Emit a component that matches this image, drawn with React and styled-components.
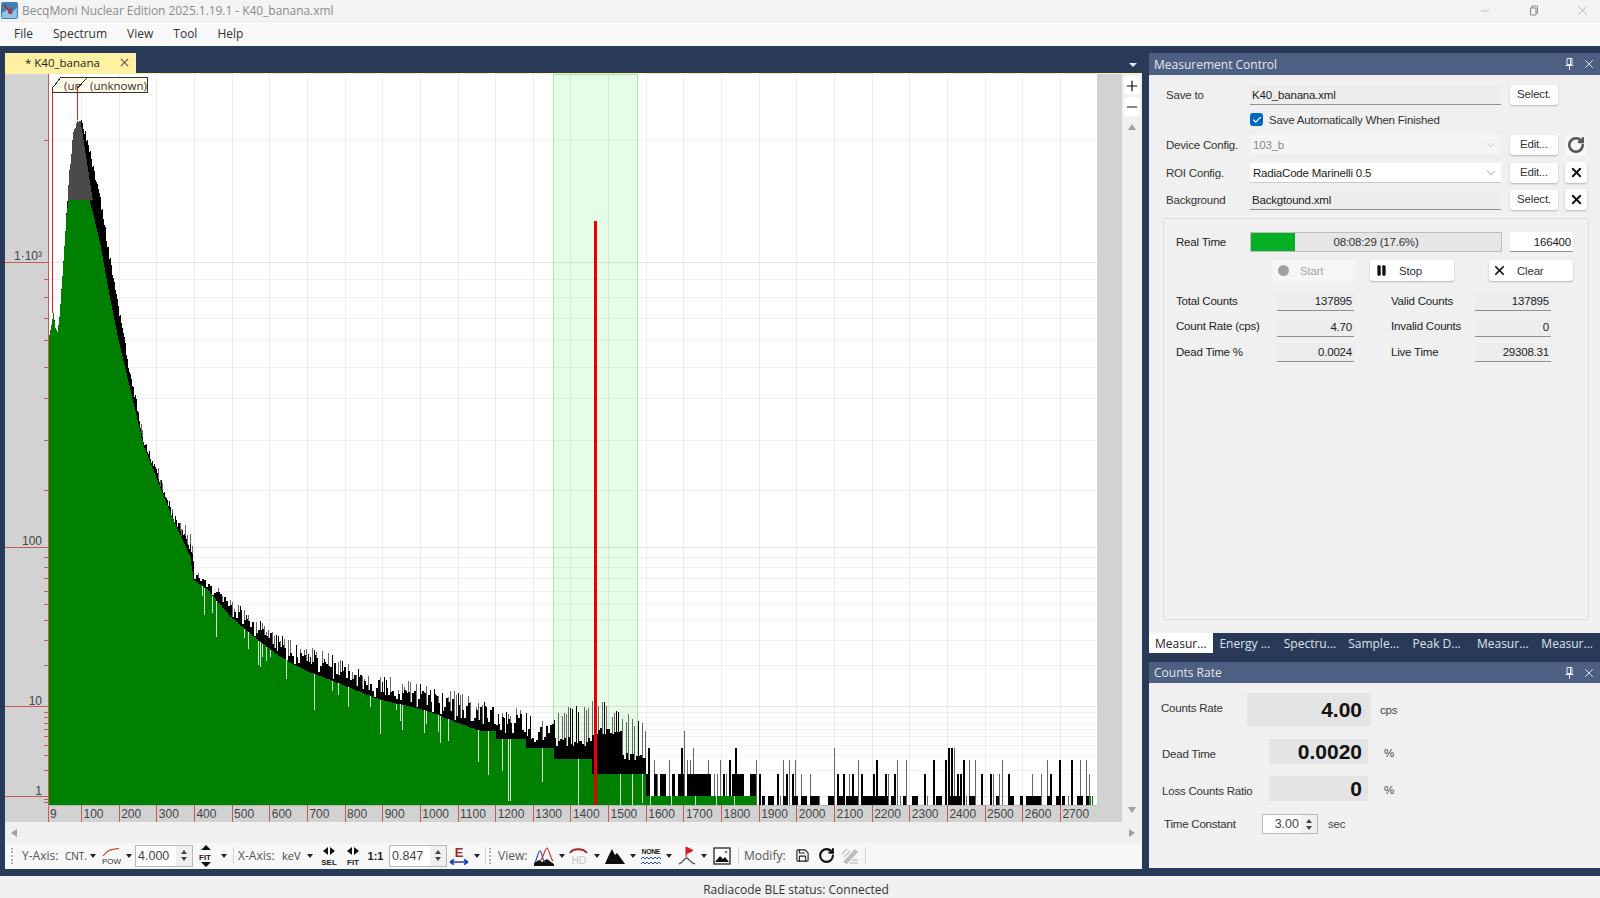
import React from 'react';
import styled, { createGlobalStyle } from 'styled-components';
import { X, RotateCw, Save, ChevronDown, Pause, Plus, Minus, Check } from 'lucide-react';

const GlobalStyle = createGlobalStyle`
  html, body { margin: 0; padding: 0; background: #f0f0f0; }
  body { font-family: "Liberation Sans", Arial, sans-serif; font-size: 11.5px; letter-spacing: -0.2px; color: #222; overflow: hidden; }
`;

const UI_FONT = '"Open Sans", "Liberation Sans", sans-serif';

// ---- spectrum data, seeded so every render looks the same ----
const rand = (() => {
  let a = 20250119;
  return () => {
    a |= 0; a = (a + 0x6d2b79f5) | 0;
    let t = Math.imul(a ^ (a >>> 15), 1 | a);
    t = (t + Math.imul(t ^ (t >>> 7), 61 | t)) ^ t;
    return ((t ^ (t >>> 14)) >>> 0) / 4294967296;
  };
})();

const BOTTOM = 805;
const lerp = (pts, x) => {
  for (let i = 1; i < pts.length; i++) {
    if (x <= pts[i][0]) {
      const [x0, y0] = pts[i - 1];
      const [x1, y1] = pts[i];
      return y0 + ((y1 - y0) * (x - x0)) / (x1 - x0);
    }
  }
  return pts[pts.length - 1][1];
};

const blackEnv = [[49,335],[51,325],[53,313],[55,328],[57,332],[59,318],[61,290],[63,262],[66,215],[69,170],[72,140],[75,125],[78,118],[82,124],[86,138],[90,155],[94,175],[100,200],[108,250],[115,290],[124,340],[128,365],[143,438],[155,470],[173,515],[190,548],[197,572],[230,596],[263,622],[297,642],[330,652],[363,668],[397,678],[430,686],[463,693],[497,705],[553,712],[595,697],[645,722]];
const greenEnv = [[49,335],[51,325],[53,313],[55,328],[57,332],[59,318],[61,290],[63,262],[66,215],[68,200],[89,200],[93,215],[100,245],[110,300],[118,340],[124,365],[130,390],[143,445],[173,520],[190,557],[193,580],[207,590],[230,617],[257,640],[280,657],[303,670],[330,680],[347,687],[380,700],[403,705],[430,712],[457,723],[480,731]];
const levels = [805, 796, 774, 760, 748, 739, 731, 724, 717];

const greenTop = (x) => {
  if (x < 480) return lerp(greenEnv, x);
  if (x < 495) return 731;
  if (x < 525) return 739;
  if (x < 553) return 748;
  if (x < 592) return 759;
  if (x < 645) return 774;
  if (x < 755) return 796;
  return BOTTOM;
};

const bar = (x, w, y, end = BOTTOM) => {
  let d = '';
  for (let i = 0; i < w; i++) d += `M${x + i + 0.5} ${y.toFixed(1)}V${end.toFixed(1)}`;
  return d;
};

const solidHeight = (x) => {
  if (x < 480) return rand() * 0.75 * (greenTop(x) - lerp(blackEnv, x));
  if (x < 553) return 6 + rand() * 20;
  if (x < 592) return 12 + rand() * 10;
  if (x < 622) return 36 + rand() * 10;
  return 14 + rand() * 10;
};

const pickLevel = (x) => {
  const r = rand();
  if (x < 755) return r < 0.2 ? 0 : r < 0.62 ? 2 : r < 0.82 ? 3 : r < 0.94 ? 4 : 6;
  const empty = x > 1000 ? 0.42 : x > 900 ? 0.3 : 0.18;
  if (r < empty) return 0;
  const s = (r - empty) / (1 - empty);
  return s < 0.42 ? 1 : s < 0.72 ? 2 : s < 0.94 ? 3 : 4;
};

const buildSpectrum = () => {
  let black = '', gray = '', green = '', peak = '', pale = '';
  // main peak, one pixel per channel
  for (let x = 49; x < 194; x++) {
    const g = greenTop(x);
    const amp = x < 66 ? 3 : x < 130 ? 9 : 10;
    const top = Math.min(lerp(blackEnv, x) + (rand() - 0.5) * amp, g);
    black += bar(x, 1, top);
    if (x > 130 && rand() < 0.25) gray += bar(x, 1, top - 4 - rand() * 8);
    green += bar(x, 1, g);
    if (x >= 66 && x <= 92 && top < 200) {
      const start = x <= 80 ? top : Math.max(top, 120 + (x - 80) * 6.5);
      peak += `M${x + 0.5} ${start.toFixed(1)}V200`;
    }
  }
  // noisy tail, two pixels per channel
  for (let x = 194; x < 645; x += 2) {
    const g = greenTop(x);
    black += bar(x, 2, g - solidHeight(x));
    if (rand() < 0.62) {
      const spike = Math.min(lerp(blackEnv, x) + rand() * 12, g);
      if (rand() < 0.3) black += bar(x, 1, spike);
      else gray += bar(x, 1, spike);
    }
    green += bar(x, 2, g);
    if (x > 200 && rand() < (x > 480 ? 0.12 : 0.2)) {
      const len = x > 480 ? 25 + rand() * 50 : 5 + rand() * 34;
      pale += `M${x + 0.5} ${g.toFixed(1)}V${Math.min(BOTTOM, g + len).toFixed(1)}`;
    }
  }
  // sparse counts, three pixels per channel
  for (let x = 645; x < 1090; x += 3) {
    const lvl = pickLevel(x);
    const y = levels[lvl];
    if (lvl === 1 || (x < 680 && lvl === 2)) {
      if (rand() < 0.8) black += bar(x, 3, y);
      else gray += bar(x, 1, y);
    } else if (lvl > 0) {
      if (rand() < 0.45) black += bar(x, 2, y);
      else gray += bar(x, 1, y);
      if (rand() < 0.55) black += bar(x, 3, levels[x < 755 ? 2 : 1]);
    }
    if (x < 755) {
      if (rand() < 0.12) {
        green += bar(x, 2, 796);
        pale += bar(x + 2, 1, 796);
      } else {
        green += bar(x, 3, 796);
      }
    }
  }
  green += bar(1090, 1, 796) + bar(1092, 1, 796);
  gray += bar(1088, 1, 796);
  return { black, gray, green, peak, pale };
};

const spectrum = buildSpectrum();
const kevX = (k) => 81.5 + (k - 100) * 0.3765;
const kevTicks = Array.from({ length: 27 }, (_, i) => (i + 1) * 100);
const minorY = [140, 279, 297, 318, 340, 367, 398, 440, 490, 557, 567, 578, 591, 604, 620, 640, 665, 712, 717, 723, 729, 736, 745, 755, 770];
const majorY = [[262, '1·10³', 260], [547, '100', 545], [706, '10', 705], [796, '1', 795]];

const Chart = () => (
  <ChartSvg viewBox="5 74 1117 748" width="1117" height="748" shapeRendering="crispEdges">
    <rect x="5" y="74" width="1117" height="748" fill="#d2d2d2" />
    <rect x="49" y="74" width="1048" height="731" fill="#fff" />
    <rect x="553.5" y="74" width="84" height="731" fill="#e6fce6" stroke="#a9e8a9" />
    {minorY.map((y) => <line key={y} x1="49" x2="1097" y1={y + 0.5} y2={y + 0.5} stroke="rgba(0,0,0,0.05)" />)}
    {majorY.map(([y]) => <line key={y} x1="49" x2="1097" y1={y + 0.5} y2={y + 0.5} stroke="rgba(0,0,0,0.1)" />)}
    {kevTicks.map((k) => <line key={k} x1={kevX(k)} x2={kevX(k)} y1="74" y2="805" stroke="rgba(0,0,0,0.07)" />)}

    <path d={spectrum.gray} stroke="#666" strokeWidth="1" fill="none" />
    <path d={spectrum.black} stroke="#000" strokeWidth="1" fill="none" />
    <path d={spectrum.green} stroke="#008000" strokeWidth="1" fill="none" />
    <path d={spectrum.peak} stroke="#4a4a4a" strokeWidth="1" fill="none" />
    <path d={spectrum.pale} stroke="#d5e9d5" strokeWidth="1" fill="none" />

    <rect x="593.5" y="221" width="3" height="584" fill="#e60000" />

    {/* y axis */}
    <line x1="48.5" x2="48.5" y1="74" y2="822" stroke="#c25a5a" />
    {minorY.map((y) => <line key={y} x1="44" x2="48" y1={y + 0.5} y2={y + 0.5} stroke="#c25a5a" />)}
    <line x1="44" x2="48" y1="799.5" y2="799.5" stroke="#c25a5a" />
    <line x1="44" x2="48" y1="802.5" y2="802.5" stroke="#c25a5a" />
    {majorY.map(([y, label, base]) => (
      <g key={y}>
        <line x1="5" x2="48" y1={y + 0.5} y2={y + 0.5} stroke="#c25a5a" />
        <AxisText x="42" y={base} textAnchor="end">{label}</AxisText>
      </g>
    ))}

    {/* x axis */}
    <line x1="48" x2="1097" y1="805.5" y2="805.5" stroke="#b9b9b9" />
    <AxisText x="50" y="818">9</AxisText>
    {kevTicks.map((k) => (
      <g key={k}>
        <line x1={kevX(k)} x2={kevX(k)} y1="805" y2="822" stroke="#c25a5a" />
        <AxisText x={kevX(k) + 2} y="818">{k}</AxisText>
      </g>
    ))}

    {/* peak tags */}
    <line x1="52.5" x2="52.5" y1="90" y2="313" stroke="#d81e1e" />
    <line x1="77.5" x2="77.5" y1="90" y2="120" stroke="#d81e1e" />
    <polygon points="52.5,88 60.5,77.5 147.5,77.5 147.5,92.5 52.5,92.5" fill="#fffbe8" stroke="#333" />
    <TagText x="64" y="90">(un</TagText>
    <polygon points="77.5,92.5 77.5,88 87.5,77.5 147.5,77.5 147.5,92.5" fill="#fffbe8" stroke="#333" />
    <TagText x="90" y="90">(unknown)</TagText>
    <line x1="77.5" x2="77.5" y1="86" y2="93" stroke="#d81e1e" />
  </ChartSvg>
);

// ---- toolbar icons ----
const PowIcon = () => (
  <svg width="20" height="20" viewBox="0 0 20 20">
    <path d="M2 10 C6 5 9 3 18 2.5" stroke="#c0392b" strokeWidth="1.2" fill="none" />
    <text x="1" y="18" fontSize="8" fill="#333" fontFamily="Liberation Sans">POW</text>
  </svg>
);
const FitYIcon = () => (
  <svg width="18" height="24" viewBox="0 0 18 24">
    <path d="M9 1 L14 6 H4 Z M9 23 L14 18 H4 Z" fill="#111" />
    <text x="2" y="15.5" fontSize="8" fontWeight="700" fill="#222" fontFamily="Liberation Sans">FIT</text>
  </svg>
);
const SpreadIcon = ({ label }) => (
  <svg width="20" height="22" viewBox="0 0 20 22">
    <path d="M9 2 V10 L4 6 Z M11 2 V10 L16 6 Z" fill="#111" />
    <text x="10" y="20" textAnchor="middle" fontSize="8" fontWeight="700" fill="#222" fontFamily="Liberation Sans">{label}</text>
  </svg>
);
const EnergyIcon = () => (
  <svg width="20" height="22" viewBox="0 0 20 22">
    <text x="10" y="12" textAnchor="middle" fontSize="13" fontWeight="700" fill="#a3262a" fontFamily="Liberation Sans">E</text>
    <path d="M1 17 H19 M1 17 L5 14.5 M1 17 L5 19.5 M19 17 L15 14.5 M19 17 L15 19.5" stroke="#1f3fb5" strokeWidth="1.5" fill="none" />
  </svg>
);
const OverlayIcon = () => (
  <svg width="20" height="20" viewBox="0 0 20 20">
    <path d="M0 20 V17 L5 14 L8 16 L13 13 L17 16 L20 18 V20 Z" fill="#111" />
    <path d="M1 16 C3 14 4 5 6 5 C8 5 8 14 11 16" stroke="#1f3fb5" strokeWidth="1.1" fill="none" />
    <path d="M6 15 C9 13 11 2 13 2 C15 2 16 12 19 15" stroke="#d32626" strokeWidth="1.1" fill="none" />
  </svg>
);
const HdIcon = () => (
  <svg width="20" height="20" viewBox="0 0 20 20">
    <path d="M1 7 C4 2 14 2 18 7" stroke="#a3262a" strokeWidth="1.8" fill="none" />
    <text x="10" y="18" textAnchor="middle" fontSize="10" fill="#c4c4c4" fontFamily="Liberation Sans">HD</text>
  </svg>
);
const PeaksIcon = () => (
  <svg width="20" height="18" viewBox="0 0 20 18">
    <path d="M0 17 L3 10 L7 2 L10 8 L12 6 L15 10 L20 17 Z" fill="#0c0c0c" />
  </svg>
);
const NoneIcon = () => (
  <svg width="20" height="20" viewBox="0 0 20 20">
    <text x="10" y="8" textAnchor="middle" fontSize="7" fontWeight="700" fill="#222" fontFamily="Liberation Sans" textLength="19">NONE</text>
    <path d="M0 13 l2 -2 l2 2 l2 -2 l2 2 l2 -2 l2 2 l2 -2 l2 2 l2 -2 l2 2 M0 18 l2 -2 l2 2 l2 -2 l2 2 l2 -2 l2 2 l2 -2 l2 2 l2 -2 l2 2" stroke="#2c4cc4" strokeWidth="1" fill="none" />
  </svg>
);
const FlagIcon = () => (
  <svg width="18" height="20" viewBox="0 0 18 20">
    <path d="M8 11 V1 L15 4.5 L9 7.5" fill="#d91c1c" stroke="#d91c1c" />
    <path d="M1 18 C5 17 6 12 8.5 12 C11 12 12 17 17 18" stroke="#555" strokeWidth="1.4" fill="none" />
  </svg>
);
const ImageIcon = () => (
  <svg width="18" height="18" viewBox="0 0 18 18">
    <rect x="1" y="1" width="16" height="16" fill="#fff" stroke="#333" strokeWidth="1.4" />
    <path d="M2 15 L7 9 L10 12 L12 10 L16 15 Z" fill="#111" />
    <circle cx="13" cy="5" r="1.3" fill="#777" />
  </svg>
);
const BatchIcon = () => (
  <svg width="18" height="18" viewBox="0 0 18 18">
    <path d="M2 15 L14 2 L17 5 L6 17 Z" fill="#bdbdbd" />
    <path d="M1 7 L6 2 M3 10 L9 4 M9 16 H17 M11 13 H17" stroke="#c8c8c8" strokeWidth="1.6" />
  </svg>
);
const PinIcon = () => (
  <svg width="9" height="12" viewBox="0 0 9 12">
    <path d="M2 .5 H7 V6.5 H2 Z M.5 7.5 H8.5 M4.5 7.5 V12 M5.5 1 V6" stroke="#e6ebf3" strokeWidth="1" fill="none" />
  </svg>
);

const MeasurementTabs = ['Measur...', 'Energy ...', 'Spectru...', 'Sample...', 'Peak D...', 'Measur...', 'Measur...'];

const App = () => (
  <Page>
    <GlobalStyle />
    <TitleBar>
      <AppIcon viewBox="0 0 16 16" width="17" height="17">
        <rect width="16" height="16" rx="2" fill="#3f7fb3" />
        <path d="M1 10 L6 7 L9 12 L15 5 V15 H1 Z" fill="#8fc5e6" />
        <path d="M3 3 L10 11 M10 6 L7 11" stroke="#c8202a" strokeWidth="1.6" />
      </AppIcon>
      <AppTitle>BecqMoni Nuclear Edition 2025.1.19.1 - K40_banana.xml</AppTitle>
      <WindowButtons>
        <WindowButton><Minus size={12} strokeWidth={1} /></WindowButton>
        <WindowButton>
          <svg width="11" height="11" viewBox="0 0 11 11"><path d="M2.5 3 H8 V10 H2.5 Z M4 3 V1 H9.5 V8 H8" stroke="#8c8c8c" fill="none" /></svg>
        </WindowButton>
        <WindowButton><X size={15} strokeWidth={1} /></WindowButton>
      </WindowButtons>
    </TitleBar>
    <MenuBar>
      {['File', 'Spectrum', 'View', 'Tool', 'Help'].map((m) => <MenuItem key={m}>{m}</MenuItem>)}
    </MenuBar>

    <Workspace>
      <MainPanel>
        <DocTabs>
          <DocTab>
            <span>* K40_banana</span>
            <X size={13} strokeWidth={2.2} color="#6f6a4f" />
          </DocTab>
          <TabMenuArrow />
        </DocTabs>
        <DocRule />
        <ChartRow>
          <Chart />
          <SideStrip>
            <ZoomButton><Plus size={16} strokeWidth={1.8} /></ZoomButton>
            <ZoomButton><Minus size={16} strokeWidth={1.8} /></ZoomButton>
            <ScrollArrow $dir="up" />
            <SideSpacer />
            <ScrollArrow $dir="down" />
          </SideStrip>
        </ChartRow>
        <HScroll>
          <ScrollArrow $dir="left" />
          <ScrollArrow $dir="right" />
        </HScroll>
        <Toolbar>
          <Grip />
          <ToolLabel $w={47} $pl={8}>Y-Axis:</ToolLabel>
          <ToolCombo $w={27} $size={10}>CNT.</ToolCombo>
          <Caret />
          <ToolIcon $w={25}><PowIcon /></ToolIcon>
          <Caret $w={11} />
          <SpinBox $w={58} $h={22} $ml={1}>
            <SpinValue $align="left">4.000</SpinValue>
            <SpinArrows><SpinUp /><SpinDown /></SpinArrows>
          </SpinBox>
          <ToolIcon $w={26}><FitYIcon /></ToolIcon>
          <Caret $w={9} />
          <ToolSep $ml={5} />
          <ToolLabel $w={44} $pl={4}>X-Axis:</ToolLabel>
          <ToolCombo $w={26}>keV</ToolCombo>
          <Caret $w={12} />
          <ToolIcon $w={25}><SpreadIcon label="SEL" /></ToolIcon>
          <ToolIcon $w={23}><SpreadIcon label="FIT" /></ToolIcon>
          <OneToOne>1:1</OneToOne>
          <SpinBox $w={58} $h={22} $ml={2}>
            <SpinValue $align="left">0.847</SpinValue>
            <SpinArrows><SpinUp /><SpinDown /></SpinArrows>
          </SpinBox>
          <ToolIcon $w={24}><EnergyIcon /></ToolIcon>
          <Caret $w={12} />
          <ToolSep $ml={2} />
          <Grip $ml={3} />
          <ToolLabel $w={38} $pl={6}>View:</ToolLabel>
          <ToolIcon $w={27}><OverlayIcon /></ToolIcon>
          <Caret />
          <ToolIcon $w={24}><HdIcon /></ToolIcon>
          <Caret $w={12} />
          <ToolIcon $w={24}><PeaksIcon /></ToolIcon>
          <Caret $w={12} />
          <ToolIcon $w={24}><NoneIcon /></ToolIcon>
          <Caret $w={12} />
          <ToolIcon $w={23}><FlagIcon /></ToolIcon>
          <Caret $w={12} />
          <ToolIcon $w={23}><ImageIcon /></ToolIcon>
          <ToolSep $ml={5} />
          <ToolLabel $w={51} $pl={5}>Modify:</ToolLabel>
          <ToolIcon $w={25}><Save size={15} strokeWidth={1.8} color="#222" /></ToolIcon>
          <ToolIcon $w={22}><RotateCw size={17} strokeWidth={3} color="#111" /></ToolIcon>
          <ToolIcon $w={26}><BatchIcon /></ToolIcon>
          <ToolSep $ml={2} />
        </Toolbar>
      </MainPanel>

      <SidePanel>
        <PanelHeader>
          <span>Measurement Control</span>
          <HeaderIcons><PinIcon /><X size={14} strokeWidth={1.6} color="#e6ebf3" /></HeaderIcons>
        </PanelHeader>
        <ControlBody>
          <FormRow $h={26}>
            <FormLabel>Save to</FormLabel>
            <TextField>K40_banana.xml</TextField>
            <SmallButton>Select.</SmallButton>
          </FormRow>
          <FormRow $h={23}>
            <FormLabel />
            <CheckMark><Check size={10} strokeWidth={3} color="#fff" /></CheckMark>
            <CheckLabel>Save Automatically When Finished</CheckLabel>
          </FormRow>
          <FormRow $h={28}>
            <FormLabel>Device Config.</FormLabel>
            <Combo $disabled>103_b<ChevronDown size={14} strokeWidth={1.2} color="#b5b5b5" /></Combo>
            <SmallButton>Edit...</SmallButton>
            <IconButton $muted><RotateCw size={18} strokeWidth={3.4} color="#555" /></IconButton>
          </FormRow>
          <FormRow $h={27}>
            <FormLabel>ROI Config.</FormLabel>
            <Combo>RadiaCode Marinelli 0.5<ChevronDown size={14} strokeWidth={1.2} color="#777" /></Combo>
            <SmallButton>Edit...</SmallButton>
            <IconButton><X size={15} strokeWidth={3} color="#111" /></IconButton>
          </FormRow>
          <FormRow $h={27}>
            <FormLabel>Background</FormLabel>
            <TextField>Backgtound.xml</TextField>
            <SmallButton>Select.</SmallButton>
            <IconButton><X size={15} strokeWidth={3} color="#111" /></IconButton>
          </FormRow>

          <GroupBox>
            <TimeRow>
              <TimeLabel>Real Time</TimeLabel>
              <ProgressTrack>
                <ProgressFill style={{ width: '17.6%' }} />
                <ProgressText>08:08:29 (17.6%)</ProgressText>
              </ProgressTrack>
              <TimeInput>166400</TimeInput>
            </TimeRow>
            <ActionRow>
              <ActionButton $disabled>
                <StartDot />
                <span>Start</span>
              </ActionButton>
              <ActionButton>
                <Pause size={13} fill="#111" strokeWidth={1} color="#111" />
                <span>Stop</span>
              </ActionButton>
              <ActionButton $ml={35} $pl={3} $gap={10}>
                <X size={15} strokeWidth={2.8} color="#111" />
                <span>Clear</span>
              </ActionButton>
            </ActionRow>
            <StatsGrid>
              <StatName>Total Counts</StatName><StatValue>137895</StatValue>
              <StatName $ml={37}>Valid Counts</StatName><StatValue>137895</StatValue>
              <StatName>Count Rate (cps)</StatName><StatValue>4.70</StatValue>
              <StatName $ml={37}>Invalid Counts</StatName><StatValue>0</StatValue>
              <StatName>Dead Time %</StatName><StatValue>0.0024</StatValue>
              <StatName $ml={37}>Live Time</StatName><StatValue>29308.31</StatValue>
            </StatsGrid>
          </GroupBox>
        </ControlBody>
        <BottomTabs>
          {MeasurementTabs.map((t, i) => <BottomTab key={i} $active={i === 0}>{t}</BottomTab>)}
        </BottomTabs>

        <PanelHeader $mt={9} $h={21}>
          <span>Counts Rate</span>
          <HeaderIcons><PinIcon /><X size={14} strokeWidth={1.6} color="#e6ebf3" /></HeaderIcons>
        </PanelHeader>
        <RateBody>
          <RateRow $pl={12} $lw={86} $mt={0}>
            <RateLabel $pb={3}>Counts Rate</RateLabel>
            <RateValue $w={124} $h={33} $pr={9}>4.00</RateValue>
            <RateUnit $ml={9} $pt={0}>cps</RateUnit>
          </RateRow>
          <RateRow $pl={13} $lw={107} $mt={13}>
            <RateLabel $pt={5}>Dead Time</RateLabel>
            <RateValue $w={99} $h={25} $pr={6}>0.0020</RateValue>
            <RateUnit $ml={16} $pt={3}>%</RateUnit>
          </RateRow>
          <RateRow $pl={13} $lw={107} $mt={12}>
            <RateLabel $pt={4}>Loss Counts Ratio</RateLabel>
            <RateValue $w={99} $h={25} $pr={6}>0</RateValue>
            <RateUnit $ml={16} $pt={3}>%</RateUnit>
          </RateRow>
          <RateRow $pl={15} $lw={98} $mt={13}>
            <RateLabel>Time Constant</RateLabel>
            <SpinBox $w={56} $h={20}>
              <SpinValue $align="right">3.00</SpinValue>
              <SpinArrows><SpinUp /><SpinDown /></SpinArrows>
            </SpinBox>
            <RateUnit $ml={10} $pt={0}>sec</RateUnit>
          </RateRow>
        </RateBody>
      </SidePanel>
    </Workspace>

    <StatusBar>Radiacode BLE status: Connected</StatusBar>
  </Page>
);

export default App;

// Styled Components
const Page = styled.div`
  width: 1600px;
  height: 898px;
  display: flex;
  flex-direction: column;
  overflow: hidden;
`;

const TitleBar = styled.div`
  height: 21px;
  display: flex;
  align-items: center;
  background: #f3f3f3;
  padding-left: 1px;
`;

const AppIcon = styled.svg`
  flex: none;
`;

const AppTitle = styled.div`
  margin-left: 4px;
  font-family: ${UI_FONT};
  font-size: 12px;
  letter-spacing: -0.05px;
  color: #8b8b8b;
  white-space: nowrap;
`;

const WindowButtons = styled.div`
  margin-left: auto;
  margin-right: -7px;
  display: flex;
  align-items: center;
  color: #8c8c8c;
`;

const WindowButton = styled.div`
  width: 49px;
  display: flex;
  justify-content: center;
`;

const MenuBar = styled.div`
  height: 25px;
  display: flex;
  align-items: center;
  background: #f9f9f9;
  border-top: 1px solid #ececec;
  box-sizing: border-box;
  padding: 0 0 2px 14px;
  gap: 20px;
`;

const MenuItem = styled.div`
  font-family: ${UI_FONT};
  font-size: 12px;
  letter-spacing: 0;
  color: #333;
`;

const Workspace = styled.div`
  height: 830px;
  display: flex;
  background: #293a58;
  padding-left: 5px;
  box-sizing: border-box;
`;

const MainPanel = styled.div`
  width: 1137px;
  flex: none;
  display: flex;
  flex-direction: column;
`;

const DocTabs = styled.div`
  height: 27px;
  display: flex;
  align-items: flex-end;
  justify-content: space-between;
`;

const DocTab = styled.div`
  width: 131px;
  height: 20px;
  box-sizing: border-box;
  padding: 0 5px 2px 20px;
  display: flex;
  align-items: center;
  justify-content: space-between;
  background: #fff1a4;
  font-family: ${UI_FONT};
  font-size: 11.5px;
  letter-spacing: 0;
  color: #222;
`;

const TabMenuArrow = styled.div`
  width: 0;
  height: 0;
  margin: 0 5px 6px 0;
  border-left: 4px solid transparent;
  border-right: 4px solid transparent;
  border-top: 4px solid #e4e8ef;
`;

const DocRule = styled.div`
  height: 1px;
  background: #fff1a4;
`;

const ChartRow = styled.div`
  height: 748px;
  display: flex;
`;

const ChartSvg = styled.svg`
  flex: none;
  display: block;
`;

const AxisText = styled.text`
  font-family: "Liberation Sans", sans-serif;
  font-size: 12px;
  letter-spacing: 0;
  fill: #444;
`;

const TagText = styled.text`
  font-family: ${UI_FONT};
  font-size: 11.5px;
  letter-spacing: 0;
  fill: #333;
`;

const SideStrip = styled.div`
  width: 20px;
  background: #f0f0f0;
  display: flex;
  flex-direction: column;
  align-items: center;
  padding: 2px 0 3px;
  box-sizing: border-box;
`;

const SideSpacer = styled.div`
  flex: 1;
`;

const ZoomButton = styled.div`
  width: 16px;
  height: 19px;
  margin-bottom: 2px;
  background: #fff;
  border-radius: 3px;
  display: flex;
  align-items: center;
  justify-content: center;
  color: #111;
`;

const arrowBorders = {
  up: 'border-left: 4.5px solid transparent; border-right: 4.5px solid transparent; border-bottom: 6px solid #a0a0a0;',
  down: 'border-left: 4.5px solid transparent; border-right: 4.5px solid transparent; border-top: 6px solid #a0a0a0;',
  left: 'border-top: 4.5px solid transparent; border-bottom: 4.5px solid transparent; border-right: 6px solid #a0a0a0;',
  right: 'border-top: 4.5px solid transparent; border-bottom: 4.5px solid transparent; border-left: 6px solid #a0a0a0;',
};

const ScrollArrow = styled.div`
  width: 0;
  height: 0;
  margin: 6px 0;
  ${(p) => arrowBorders[p.$dir]}
`;

const HScroll = styled.div`
  height: 21px;
  display: flex;
  align-items: center;
  justify-content: space-between;
  background: #f0f0f0;
  padding: 0 7px 0 6px;
`;

const Toolbar = styled.div`
  height: 26px;
  display: flex;
  align-items: center;
  box-sizing: border-box;
  padding-bottom: 1px;
  background: #f7f7f7;
  font-family: ${UI_FONT};
  font-size: 12px;
  letter-spacing: 0;
  color: #555;
`;

const Grip = styled.div`
  width: 3px;
  height: 16px;
  flex: none;
  margin-left: ${(p) => p.$ml ?? 6}px;
  border-left: 2px dotted #b4b4b4;
  box-sizing: border-box;
`;

const ToolLabel = styled.div`
  width: ${(p) => p.$w}px;
  padding-left: ${(p) => p.$pl}px;
  box-sizing: border-box;
  flex: none;
  white-space: nowrap;
`;

const ToolCombo = styled.div`
  width: ${(p) => p.$w}px;
  padding-left: 4px;
  box-sizing: border-box;
  flex: none;
  font-size: ${(p) => p.$size ?? 11}px;
  color: #444;
`;

const ToolIcon = styled.div`
  width: ${(p) => p.$w}px;
  flex: none;
  display: flex;
  align-items: center;
  justify-content: center;
`;

const OneToOne = styled.div`
  width: 23px;
  flex: none;
  text-align: center;
  font-family: "Liberation Sans", sans-serif;
  font-size: 11px;
  font-weight: 700;
  color: #222;
`;

const Caret = styled.div`
  width: ${(p) => p.$w ?? 10}px;
  height: 4px;
  flex: none;
  position: relative;
  &::after {
    content: '';
    position: absolute;
    left: 50%;
    top: 0;
    margin-left: -3px;
    border-left: 3px solid transparent;
    border-right: 3px solid transparent;
    border-top: 4px solid #222;
  }
`;

const ToolSep = styled.div`
  width: 1px;
  height: 17px;
  flex: none;
  margin-left: ${(p) => p.$ml}px;
  background: #d4d4d4;
`;

const SpinBox = styled.div`
  width: ${(p) => p.$w}px;
  height: ${(p) => p.$h}px;
  margin-left: ${(p) => p.$ml ?? 0}px;
  flex: none;
  box-sizing: border-box;
  display: flex;
  align-items: center;
  background: #fff;
  border: 1px solid #b8b8b8;
`;

const SpinValue = styled.div`
  flex: 1;
  padding: 0 2px;
  text-align: ${(p) => p.$align};
  font-family: "Liberation Sans", sans-serif;
  font-size: 12.5px;
  letter-spacing: 0;
  color: #444;
`;

const SpinArrows = styled.div`
  width: 16px;
  height: 100%;
  flex: none;
  display: flex;
  flex-direction: column;
  align-items: center;
  justify-content: center;
  gap: 3px;
  background: #f0f0f0;
`;

const SpinUp = styled.div`
  border-left: 3.5px solid transparent;
  border-right: 3.5px solid transparent;
  border-bottom: 4px solid #444;
`;

const SpinDown = styled.div`
  border-left: 3.5px solid transparent;
  border-right: 3.5px solid transparent;
  border-top: 4px solid #444;
`;

const SidePanel = styled.div`
  width: 451px;
  margin-left: 7px;
  padding-top: 7px;
  flex: none;
  display: flex;
  flex-direction: column;
`;

const PanelHeader = styled.div`
  height: ${(p) => p.$h ?? 22}px;
  margin-top: ${(p) => p.$mt ?? 0}px;
  flex: none;
  display: flex;
  align-items: center;
  justify-content: space-between;
  padding: 0 4px 0 5px;
  background: #4d6082;
  color: #e3e8f0;
  font-family: ${UI_FONT};
  font-size: 12px;
  letter-spacing: 0;
`;

const HeaderIcons = styled.div`
  display: flex;
  align-items: center;
  gap: 8px;
`;

const ControlBody = styled.div`
  height: 558px;
  flex: none;
  box-sizing: border-box;
  padding-top: 7px;
  background: #f0f0f0;
  display: flex;
  flex-direction: column;
`;

const FormRow = styled.div`
  height: ${(p) => p.$h}px;
  flex: none;
  display: flex;
  align-items: center;
  padding-left: 17px;
  color: #333;
`;

const FormLabel = styled.div`
  width: 84px;
  flex: none;
`;

const TextField = styled.div`
  width: 251px;
  height: 20px;
  flex: none;
  box-sizing: border-box;
  padding-left: 2px;
  line-height: 20px;
  margin-right: 9px;
  background: #ededed;
  border-bottom: 1px solid #8f8f8f;
  color: #222;
`;

const Combo = styled.div`
  width: 251px;
  height: 20px;
  flex: none;
  box-sizing: border-box;
  margin-right: 9px;
  padding: 1px 3px 0;
  display: flex;
  align-items: center;
  justify-content: space-between;
  background: ${(p) => (p.$disabled ? '#f5f5f5' : '#fff')};
  color: ${(p) => (p.$disabled ? '#888' : '#222')};
  border-bottom: 1px solid ${(p) => (p.$disabled ? '#ececec' : '#c8c8c8')};
`;

const SmallButton = styled.div`
  width: 48px;
  height: 20px;
  flex: none;
  line-height: 19px;
  text-align: center;
  background: #fff;
  border-radius: 3px;
  box-shadow: 0 1px 2px rgba(0, 0, 0, 0.25);
  color: #333;
`;

const IconButton = styled.div`
  width: 22px;
  height: 21px;
  margin-left: 7px;
  flex: none;
  display: flex;
  align-items: center;
  justify-content: center;
  border-radius: 3px;
  background: ${(p) => (p.$muted ? '#f6f6f6' : '#fff')};
  box-shadow: ${(p) => (p.$muted ? 'none' : '0 1px 2px rgba(0, 0, 0, 0.25)')};
`;

const CheckMark = styled.div`
  width: 13px;
  height: 13px;
  flex: none;
  border-radius: 3px;
  display: flex;
  align-items: center;
  justify-content: center;
  background: #0067c0;
`;

const CheckLabel = styled.div`
  margin-left: 6px;
  color: #333;
`;

const GroupBox = styled.div`
  margin: 5px 11px 0 14px;
  height: 402px;
  flex: none;
  box-sizing: border-box;
  border: 1px solid #dcdcdc;
  border-radius: 3px;
  padding: 13px 0 0 12px;
`;

const TimeRow = styled.div`
  display: flex;
  align-items: center;
  height: 20px;
`;

const TimeLabel = styled.div`
  width: 74px;
  flex: none;
`;

const ProgressTrack = styled.div`
  width: 252px;
  height: 20px;
  flex: none;
  box-sizing: border-box;
  position: relative;
  background: #e6e6e6;
  border: 1px solid #bcbcbc;
`;

const ProgressFill = styled.div`
  height: 100%;
  background: #06b025;
`;

const ProgressText = styled.div`
  position: absolute;
  inset: 0;
  line-height: 18px;
  text-align: center;
  color: #333;
`;

const TimeInput = styled.div`
  width: 63px;
  height: 20px;
  margin-left: 8px;
  flex: none;
  box-sizing: border-box;
  padding-right: 2px;
  line-height: 20px;
  text-align: right;
  background: #fff;
  border-bottom: 1px solid #8f8f8f;
`;

const ActionRow = styled.div`
  display: flex;
  margin: 8px 0 0 96px;
  gap: 14px;
`;

const ActionButton = styled.div`
  width: 84px;
  height: 21px;
  flex: none;
  box-sizing: border-box;
  margin-left: ${(p) => (p.$ml ? p.$ml - 14 : 0)}px;
  padding-left: ${(p) => p.$pl ?? 5}px;
  display: flex;
  align-items: center;
  gap: ${(p) => p.$gap ?? 11}px;
  border-radius: 3px;
  background: ${(p) => (p.$disabled ? '#f6f6f6' : '#fff')};
  color: ${(p) => (p.$disabled ? '#a5a5a5' : '#333')};
  box-shadow: ${(p) => (p.$disabled ? 'none' : '0 1px 2px rgba(0, 0, 0, 0.25)')};
`;

const StartDot = styled.div`
  width: 11px;
  height: 11px;
  margin-left: 1px;
  flex: none;
  border-radius: 50%;
  background: #a0a0a0;
`;

const StatsGrid = styled.div`
  display: grid;
  grid-template-columns: 101px 77px 121px 76px;
  grid-auto-rows: 19px;
  row-gap: 6.6px;
  align-items: center;
  margin-top: 11px;
`;

const StatName = styled.span`
  margin-left: ${(p) => p.$ml ?? 0}px;
  padding-bottom: 2px;
`;

const StatValue = styled.div`
  height: 19px;
  box-sizing: border-box;
  padding-right: 2px;
  line-height: 18px;
  text-align: right;
  background: #ededed;
  border-bottom: 1px solid #8f8f8f;
  color: #222;
`;

const BottomTabs = styled.div`
  height: 20px;
  flex: none;
  display: flex;
`;

const BottomTab = styled.div`
  width: 64.4px;
  flex: none;
  box-sizing: border-box;
  padding: 1px 0 0 6px;
  line-height: 20px;
  font-family: ${UI_FONT};
  font-size: 12px;
  letter-spacing: 0;
  white-space: nowrap;
  background: ${(p) => (p.$active ? '#fff' : 'transparent')};
  color: ${(p) => (p.$active ? '#222' : '#dfe4ec')};
`;

const RateBody = styled.div`
  height: 185px;
  flex: none;
  box-sizing: border-box;
  padding-top: 10px;
  background: #f0f0f0;
`;

const RateRow = styled.div`
  display: grid;
  grid-template-columns: ${(p) => p.$lw}px auto 1fr;
  align-items: center;
  padding-left: ${(p) => p.$pl}px;
  margin-top: ${(p) => p.$mt}px;
  color: #333;
`;

const RateLabel = styled.span`
  padding-top: ${(p) => p.$pt ?? 0}px;
  padding-bottom: ${(p) => p.$pb ?? 0}px;
`;

const RateValue = styled.div`
  width: ${(p) => p.$w}px;
  height: ${(p) => p.$h}px;
  box-sizing: border-box;
  padding-right: ${(p) => p.$pr}px;
  line-height: ${(p) => p.$h}px;
  text-align: right;
  background: #e4e4e4;
  font-size: 21px;
  font-weight: 700;
  letter-spacing: 0;
  color: #111;
`;

const RateUnit = styled.div`
  margin-left: ${(p) => p.$ml}px;
  padding-top: ${(p) => p.$pt}px;
  color: #444;
`;

const StatusBar = styled.div`
  height: 22px;
  flex: none;
  line-height: 28px;
  text-align: center;
  padding-right: 8px;
  background: #f0f0f0;
  font-family: ${UI_FONT};
  font-size: 12px;
  letter-spacing: 0;
  color: #333;
`;
